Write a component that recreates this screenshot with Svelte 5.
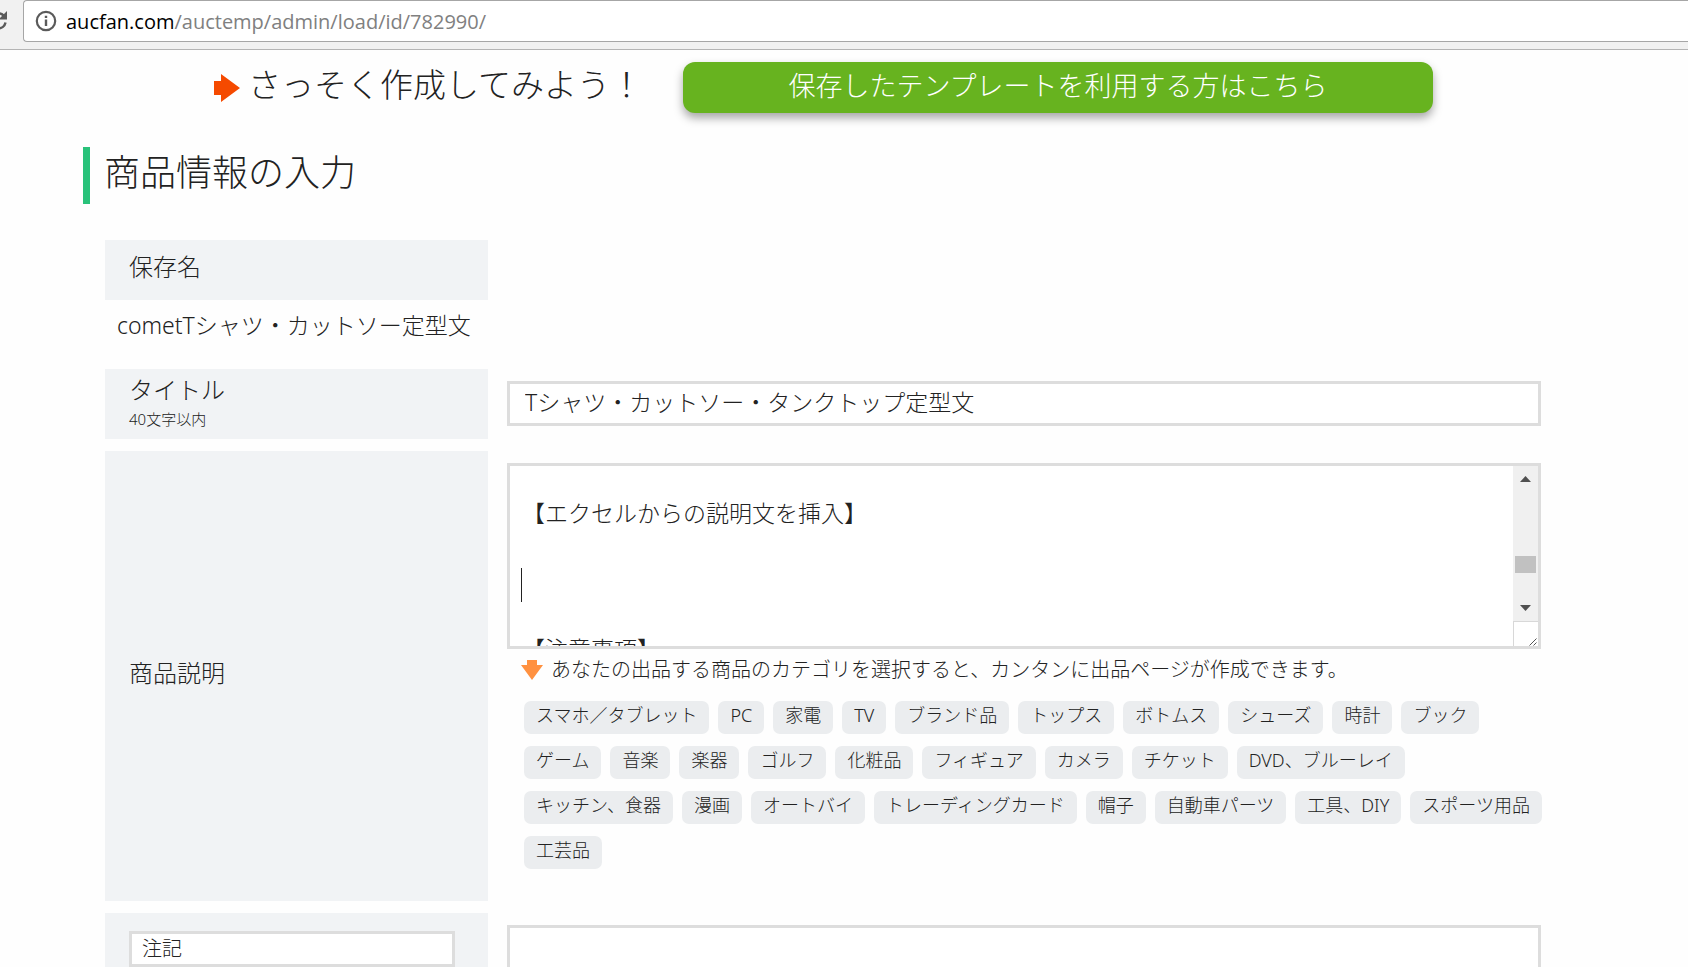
<script>
	const categories = [
		'スマホ／タブレット',
		'PC',
		'家電',
		'TV',
		'ブランド品',
		'トップス',
		'ボトムス',
		'シューズ',
		'時計',
		'ブック',
		'ゲーム',
		'音楽',
		'楽器',
		'ゴルフ',
		'化粧品',
		'フィギュア',
		'カメラ',
		'チケット',
		'DVD、ブルーレイ',
		'キッチン、食器',
		'漫画',
		'オートバイ',
		'トレーディングカード',
		'帽子',
		'自動車パーツ',
		'工具、DIY',
		'スポーツ用品',
		'工芸品'
	];

	let title = $state('Tシャツ・カットソー・タンクトップ定型文');
	let description = $state('\n【エクセルからの説明文を挿入】\n\n\n\n【注意事項】\n\n');
	let noteLabel = $state('注記');
	let note = $state('');
	let selected = $state('');

	function scrollToCaret(node) {
		node.scrollTop = 4;
	}
</script>

<div class="toolbar">
	<svg class="reload" width="8" height="24" viewBox="0 0 8 24" aria-hidden="true">
		<path d="M-9 12a7.500 7.500 0 0 1 12.800-5.300M5.500 13.500A7.500 7.500 0 0 1-2 19.500" fill="none" stroke="#5a5a5a" stroke-width="2.500" />
		<path d="M7 2v8.500h-8.500z" fill="#5a5a5a" />
	</svg>
	<div class="address">
		<svg width="22" height="22" viewBox="0 0 22 22" aria-hidden="true">
			<circle cx="11" cy="11" r="9.200" fill="none" stroke="#5a5a5a" stroke-width="2.200" />
			<path d="M9.800 9.500h2.400v6.500h-2.400zM9.800 5.800h2.400v2.200h-2.400z" fill="#5a5a5a" />
		</svg>
		<span class="url"><b>aucfan.com</b>/auctemp/admin/load/id/782990/</span>
	</div>
</div>

<main>
	<div class="lead">
		<svg width="26" height="28" viewBox="0 0 26 28" aria-hidden="true">
			<path d="M0 7h7V0l19 14L7 28v-7H0z" fill="#f54a00" />
		</svg>
		<p>さっそく作成してみよう！</p>
		<a class="saved" href="#saved">保存したテンプレートを利用する方はこちら</a>
	</div>

	<h1>商品情報の入力</h1>

	<form>
		<div class="label save-name">保存名</div>
		<p class="saved-name">cometTシャツ・カットソー定型文</p>

		<label class="label title-label" for="title">
			タイトル
			<small>40文字以内</small>
		</label>
		<div class="field">
			<input id="title" class="box title" type="text" bind:value={title} />
		</div>

		<label class="label" for="description">商品説明</label>
		<div class="field">
			<div class="box editor">
				<textarea id="description" bind:value={description} use:scrollToCaret></textarea>
				<span class="caret"></span>
				<div class="scrollbar" aria-hidden="true">
					<div class="track">
						<svg width="11" height="6" viewBox="0 0 11 6"><path d="M0 6l5.500-6L11 6z" fill="#505050" /></svg>
						<span class="thumb"></span>
						<svg width="11" height="6" viewBox="0 0 11 6"><path d="M0 0h11L5.500 6z" fill="#505050" /></svg>
					</div>
					<div class="grip">
						<svg width="8" height="8" viewBox="0 0 8 8">
							<path d="M0.500 7.500l7-7M4.500 7.500l3-3" stroke="#555" stroke-width="1" />
						</svg>
					</div>
				</div>
			</div>

			<p class="hint">
				<svg width="22" height="20" viewBox="0 0 22 20" aria-hidden="true">
					<path d="M6 0h10v5h6L11 20 0 5h6z" fill="#ff9140" />
				</svg>
				あなたの出品する商品のカテゴリを選択すると、カンタンに出品ページが作成できます。
			</p>

			<div class="tags">
				{#each categories as category}
					<button type="button" aria-pressed={selected === category} onclick={() => (selected = category)}>
						{category}
					</button>
				{/each}
			</div>
		</div>

		<div class="label note-label">
			<input class="box" type="text" aria-label="項目名" bind:value={noteLabel} />
		</div>
		<div class="field">
			<textarea class="box note" aria-label="注記" bind:value={note}></textarea>
		</div>
	</form>
</main>

<style>
	:global(body) {
		background-color: #fefefe;
		color: #222;
		font-family: 'Noto Sans', 'Noto Sans CJK JP', sans-serif;
		font-weight: 300;
		overflow-x: hidden;
	}

	p,
	h1 {
		margin: 0;
		font-weight: 300;
	}

	input,
	textarea,
	button {
		font: inherit;
		color: inherit;
		box-sizing: border-box;
	}

	.toolbar {
		display: flex;
		gap: 15px;
		height: 49px;
		background-color: #f1f1f1;
		border-bottom: 1px solid #b4b4b4;
	}

	.reload {
		margin-top: 9px;
	}

	.address {
		flex: 1;
		display: flex;
		align-items: center;
		gap: 9px;
		height: 40px;
		padding-left: 11px;
		border: 1px solid #a6a6a6;
		border-right: none;
		border-radius: 4px 0 0 4px;
		background-color: #fff;
	}

	.url {
		font-family: 'Open Sans', sans-serif;
		font-size: 20px;
		font-weight: 400;
		color: #808080;

		& b {
			font-weight: 400;
			color: #000;
		}
	}

	main {
		padding: 12px 129px 0 83px;
	}

	.lead {
		display: flex;
		align-items: center;
		height: 51px;
		padding-left: 131px;

		& p {
			margin: 0 40px 0 8px;
			padding-bottom: 6px;
			font-size: 33px;
			line-height: 45px;
			white-space: nowrap;
		}
	}

	.saved {
		flex: 0 1 750px;
		padding-bottom: 4px;
		border-radius: 12px;
		background-color: #67b31f;
		box-shadow: 0 5px 10px rgba(0, 0, 0, 0.35);
		color: #fff;
		font-size: 27px;
		line-height: 47px;
		text-align: center;
		text-decoration: none;
		white-space: nowrap;
	}

	h1 {
		margin: 34px 0 36px;
		padding: 0 0 6px 14px;
		border-left: 7px solid #29c27a;
		font-size: 36px;
		line-height: 51px;
	}

	form {
		display: grid;
		grid-template-columns: 383px minmax(0, 1fr);
		column-gap: 19px;
		row-gap: 12px;
		padding-left: 22px;
	}

	.label {
		display: flex;
		flex-direction: column;
		justify-content: center;
		padding: 0 24px 6px;
		background-color: #f1f3f5;
		font-size: 24px;
		line-height: 34px;
	}

	.save-name {
		height: 54px;
	}

	.saved-name {
		grid-column: 1 / -1;
		margin-bottom: 18px;
		padding-left: 12px;
		font-size: 23px;
		line-height: 27px;
	}

	.title-label {
		height: 66px;
		padding-bottom: 4px;

		& small {
			font-size: 15px;
			line-height: 24px;
		}
	}

	.field {
		padding-top: 12px;
	}

	.box {
		display: block;
		width: calc(100% - 18px);
		border: 3px solid #ddd;
		background-color: #fff;
		outline: none;
	}

	.title {
		height: 45px;
		padding: 0 15px 6px;
		font-size: 23px;
	}

	.editor {
		display: flex;
		position: relative;
		height: 180px;
		width: calc(100% - 24px);

		& textarea {
			flex: 1;
			padding: 0 12px;
			border: none;
			outline: none;
			background: none;
			overflow: hidden;
			resize: none;
			font-size: 23px;
			line-height: 34px;
		}
	}

	.caret {
		position: absolute;
		left: 11px;
		top: 102px;
		width: 1px;
		height: 34px;
		background-color: #222;
	}

	.scrollbar {
		display: flex;
		flex-direction: column;
		width: 25px;
	}

	.track {
		flex: 1;
		display: flex;
		flex-direction: column;
		align-items: center;
		padding: 10px 0;
		background-color: #f0f0f0;
	}

	.thumb {
		width: 21px;
		height: 17px;
		margin: auto 0 32px;
		background-color: #c1c1c1;
	}

	.grip {
		display: flex;
		align-items: flex-end;
		justify-content: flex-end;
		height: 24px;
		padding-right: 1px;
		border-top: 1px solid #d8d8d8;
		border-left: 1px solid #d8d8d8;
	}

	.hint {
		display: flex;
		align-items: center;
		gap: 8px;
		margin: 4px 0 14px;
		padding-left: 14px;
		font-size: 20px;
		line-height: 34px;
		white-space: nowrap;
	}

	.tags {
		display: flex;
		flex-wrap: wrap;
		gap: 12px 9px;
		padding: 0 0 32px 17px;

		& button {
			height: 33px;
			padding: 0 12px 4px;
			border: none;
			border-radius: 7px;
			background-color: #ebedef;
			font-size: 18px;
			line-height: 29px;
			cursor: pointer;
		}
	}

	.note-label {
		justify-content: flex-start;
		padding: 18px 33px 0 24px;

		& input {
			width: 100%;
			height: 36px;
			padding: 0 10px 4px;
			font-size: 20px;
		}
	}

	.note {
		height: 180px;
		padding: 0 12px;
		font-size: 23px;
		line-height: 34px;
	}
</style>
